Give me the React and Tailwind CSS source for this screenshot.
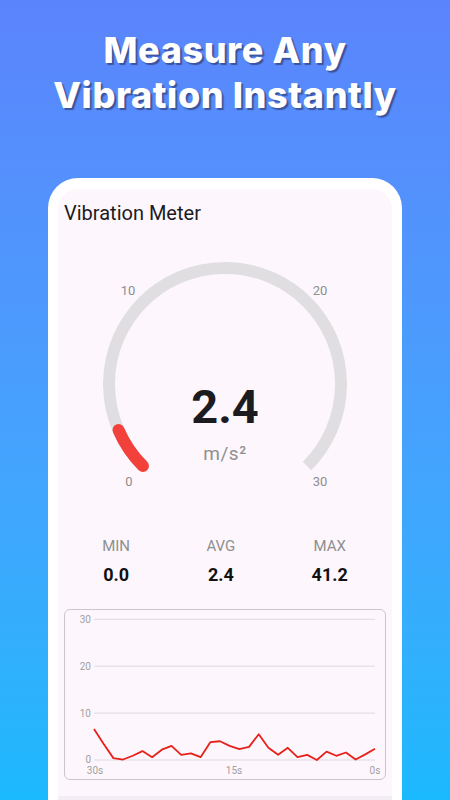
import React from 'react';

const history = [
  6.6, 3.4, 0.4, 0.1, 0.9, 1.9, 0.6, 2.2, 3.0, 1.1, 1.4, 0.6, 3.8, 4.0, 3.0,
  2.3, 2.8, 5.5, 2.6, 1.1, 2.6, 0.6, 1.1, 0.0, 1.8, 0.9, 1.6, 0.1, 1.2, 2.4,
];

const stats = [
  { label: 'MIN', value: '0.0' },
  { label: 'AVG', value: '2.4' },
  { label: 'MAX', value: '41.2' },
];

// gauge geometry
const CX = 167;
const CY = 134;
const R = 116;
const MAX_VALUE = 30;

const polar = (deg) => {
  const rad = (deg * Math.PI) / 180;
  return [CX + R * Math.cos(rad), CY + R * Math.sin(rad)];
};

const arcPath = (from, to) => {
  const [x1, y1] = polar(from);
  const [x2, y2] = polar(to);
  const large = to - from > 180 ? 1 : 0;
  return `M ${x1} ${y1} A ${R} ${R} 0 ${large} 1 ${x2} ${y2}`;
};

const Gauge = ({ value }) => {
  const end = 135 + (value / MAX_VALUE) * 270;
  return (
    <svg width="334" height="250" viewBox="0 0 334 250" className="block">
      <path d={arcPath(135, 405)} fill="none" stroke="#e1dee2" strokeWidth="12" />
      <path d={arcPath(135, end)} fill="none" stroke="#f2403a" strokeWidth="12" strokeLinecap="round" />
      <g fill="#8e8e8e" fontSize="13" textAnchor="middle" dominantBaseline="central">
        <text x="70" y="40">10</text>
        <text x="262" y="40">20</text>
        <text x="71" y="231">0</text>
        <text x="262" y="231">30</text>
      </g>
      <text x={CX} y="173" textAnchor="middle" fontSize="47" fontWeight="700" fill="#1c1b1f">
        {value.toFixed(1)}
      </text>
      <text x={CX} y="210" textAnchor="middle" fontSize="19" fill="#8f8f8f" letterSpacing="0.5">
        m/s²
      </text>
    </svg>
  );
};

const Chart = () => {
  const x0 = 29;
  const x1 = 310;
  const yFor = (v) => 150 - v * 4.69;
  const pts = history
    .map((v, i) => `${x0 + (i * (x1 - x0)) / (history.length - 1)},${yFor(v)}`)
    .join(' ');

  return (
    <div className="mx-1.5 h-[171px] rounded-md border border-[#cbc6cc]">
      <svg width="320" height="169" viewBox="0 0 320 169" className="block">
        {[30, 20, 10, 0].map((t) => (
          <g key={t}>
            <line x1={x0} x2={x1} y1={yFor(t)} y2={yFor(t)} stroke="#dcd9de" strokeWidth="1" />
            <text x="26" y={yFor(t) - (t === 0 ? 1 : 0)} textAnchor="end" dominantBaseline="central" fontSize="10" fill="#9f9f9f">
              {t}
            </text>
          </g>
        ))}
        <polyline points={pts} fill="none" stroke="#e8201a" strokeWidth="1.8" strokeLinejoin="round" />
        <g fontSize="10" fill="#9f9f9f" textAnchor="middle" dominantBaseline="central">
          <text x="30" y="160">30s</text>
          <text x="169" y="160">15s</text>
          <text x="310" y="160">0s</text>
        </g>
      </svg>
    </div>
  );
};

export default function App() {
  return (
    <div className="h-[800px] w-[450px] overflow-hidden bg-linear-to-b from-[#5b84fc] to-[#1ab9fe] font-['Roboto',sans-serif]">
      {/* Headline */}
      <h1 className="pt-[28px] text-center font-['Inter',sans-serif] text-[36px] font-extrabold leading-[45px] tracking-[0.6px] text-white [text-shadow:2px_2px_1px_rgba(30,30,60,0.5)]">
        Measure Any
        <br />
        Vibration Instantly
      </h1>

      {/* Phone frame */}
      <div className="mx-[48px] mt-[60px] rounded-t-[30px] bg-white px-[10px] pt-[11px]">
        <div className="rounded-t-[20px] bg-[#fdf7fd]">
          <div className="px-1.5 pt-3 text-[20px] leading-6 text-[#1c1b1f]">Vibration Meter</div>

          <div className="mt-[25px]">
            <Gauge value={2.4} />
          </div>

          <div className="mt-[36px] flex justify-around px-1.5">
            {stats.map((s) => (
              <div key={s.label} className="flex flex-col items-center">
                <div className="text-[15px] leading-5 text-[#8f8f8f]">{s.label}</div>
                <div className="mt-[7px] text-[18px] font-bold leading-6 text-[#111]">{s.value}</div>
              </div>
            ))}
          </div>

          <div className="mt-[22px]">
            <Chart />
          </div>

          <div className="mt-[16px] h-[40px] bg-[#f3eef5]" />
        </div>
      </div>
    </div>
  );
}
